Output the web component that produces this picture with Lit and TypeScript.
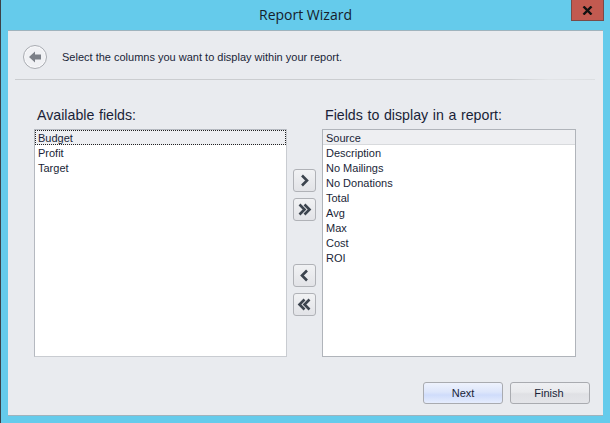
import { LitElement, html, css, svg } from "lit";
import { customElement } from "lit/decorators.js";

const chevron = (d: string) => svg`<svg class="ico" width="15" height="15" viewBox="0 0 15 15"><path d=${d} fill="none" stroke="#3c444e" stroke-width="2.6"/></svg>`;

@customElement("app-root")
export class AppRoot extends LitElement {
  static styles = css`
    :host { display: block; width: 610px; height: 423px; overflow: hidden; font-family: "Liberation Sans", Arial, sans-serif; color: #1a1f38; }
    .win { box-sizing: border-box; width: 610px; height: 423px; background: #65cbeb; border-left: 1px solid #3c4248; padding: 0 7px 7px 7px; display: flex; flex-direction: column; }
    .bar { height: 30px; flex: none; display: grid; grid-template-columns: 1fr auto; position: relative; }
    .title { font: 14px/30px "Open Sans", sans-serif; text-align: center; color: #16202a; }
    .close { position: absolute; right: -1px; top: 0; width: 33px; height: 21px; box-sizing: border-box; background: #c25a50; border: 1px solid #7a4a48; border-top: 0; display: flex; align-items: center; justify-content: center; }
    .body { flex: 1; min-height: 0; background: #e9ebef; border-top: 1px solid #9fb3bd; border-bottom: 1px solid #9fb3bd; display: flex; flex-direction: column; }
    .head { height: 49px; margin: 0 8px 0 7px; border-bottom: 1px solid #cfd1d4; border-image: linear-gradient(90deg, #cbcdd0 85%, #e2e4e7 92%, #dcdee1 100%) 1; display: flex; align-items: center; gap: 15px; padding: 3px 0 0 8px; box-sizing: border-box; }
    .back { width: 24px; height: 24px; box-sizing: border-box; border: 1px solid #a9acb2; border-radius: 50%; background: #f0f1f4; display: flex; align-items: center; justify-content: center; box-shadow: inset 0 0 0 1px #f8f8fa; }
    .msg { font-size: 11px; }
    .cols { display: grid; grid-template-columns: 253px 35px 254px; margin: 0 0 0 26px; padding-top: 27px; }
    .col { display: flex; flex-direction: column; }
    .lbl { font-size: 14.2px; word-spacing: 0.7px; line-height: 17px; height: 22px; padding-left: 3px; }
    .list { box-sizing: border-box; height: 228px; background: #fff; border: 1px solid #b5b9c0; border-right-color: #c9ccd1; border-bottom-color: #c9ccd1; font-size: 11px; display: flex; flex-direction: column; }
    .list.r { border-color: #b0b4ba; }
    .row { height: 15px; line-height: 17px; padding-left: 3px; flex: none; box-sizing: border-box; }
    .focus { background: #eeeff2; outline: 1px dotted #222; outline-offset: -1px; }
    .hdr { background: #eeeff2; border-bottom: 1px solid #d8dadd; }
    .mid { display: flex; flex-direction: column; align-items: center; padding: 62px 0 0 0; gap: 6px; box-sizing: border-box; width: 35px; }
    .sq { box-sizing: border-box; width: 23px; height: 23px; border: 1px solid #b0b2b7; border-radius: 3px; background: linear-gradient(#f1f2f4, #e2e3e7); display: flex; align-items: center; justify-content: center; }
    .gap { margin-top: 37px; }
    .foot { display: flex; justify-content: flex-end; gap: 7px; padding: 25px 13px 0 0; }
    .btn { box-sizing: border-box; width: 80px; height: 22px; border: 1px solid #a9abb0; border-radius: 3px; font-size: 11px; line-height: 20px; text-align: center; background: linear-gradient(#eeeff2 0%, #e9eaed 45%, #dfe0e4 55%, #e4e5e9 100%); }
    .btn.primary { background: linear-gradient(#eef2fd 0%, #dde6fb 45%, #cfdcfb 60%, #e6edfd 100%); }
    .btn.plain { padding-right: 2px; }
  `;

  render() {
    const left = ["Profit", "Target"];
    const right = ["Description", "No Mailings", "No Donations", "Total", "Avg", "Max", "Cost", "ROI"];
    return html`<div class="win">
      <div class="bar">
        <div class="title">Report Wizard</div>
        <div class="close"><svg width="11" height="9" viewBox="0 0 11 9"><path d="M1.5 0.5L9.5 8.5M9.5 0.5L1.5 8.5" stroke="#111" stroke-width="2.4" fill="none"/></svg></div>
      </div>
      <div class="body">
        <div class="head">
          <div class="back"><svg width="14" height="12" viewBox="0 0 14 12"><path d="M7 0.5L1 6L7 11.5V8.5H13V3.5H7Z" fill="#7c8088"/></svg></div>
          <div class="msg">Select the columns you want to display within your report.</div>
        </div>
        <div class="cols">
          <div class="col">
            <div class="lbl">Available fields:</div>
            <div class="list">
              <div class="row focus">Budget</div>
              ${left.map((t) => html`<div class="row">${t}</div>`)}
            </div>
          </div>
          <div class="mid">
            <div class="sq">${chevron("M5 2.5L10 7.5L5 12.5")}</div>
            <div class="sq">${chevron("M2.5 2.5L7.5 7.5L2.5 12.5M7.5 2.5L12.5 7.5L7.5 12.5")}</div>
            <div class="sq gap">${chevron("M10 2.5L5 7.5L10 12.5")}</div>
            <div class="sq">${chevron("M7.5 2.5L2.5 7.5L7.5 12.5M12.5 2.5L7.5 7.5L12.5 12.5")}</div>
          </div>
          <div class="col">
            <div class="lbl">Fields to display in a report:</div>
            <div class="list r">
              <div class="row hdr">Source</div>
              ${right.map((t) => html`<div class="row">${t}</div>`)}
            </div>
          </div>
        </div>
        <div class="foot">
          <div class="btn primary">Next</div>
          <div class="btn plain">Finish</div>
        </div>
      </div>
    </div>`;
  }
}
